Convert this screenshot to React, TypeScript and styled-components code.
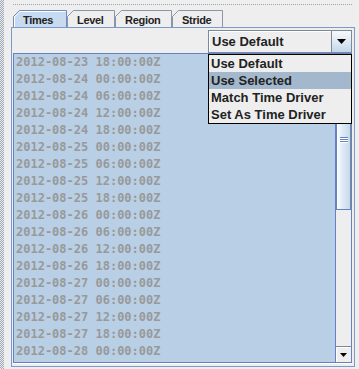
import styled, { createGlobalStyle } from "styled-components";

const UI = '"Liberation Sans", Arial, sans-serif';
const MONO = '"DejaVu Sans Mono", "Liberation Mono", monospace';

const GlobalStyle = createGlobalStyle`
  html, body {
    margin: 0;
    padding: 0;
    background: #eeeeee;
  }
  body {
    width: 359px;
    height: 369px;
    overflow: hidden;
  }
`;

const Frame = styled.div`
  display: flex;
  width: 359px;
  height: 369px;
  background: #eeeeee;
`;

const DotStrip = styled.div`
  flex: none;
  width: 4px;
  background-image: repeating-conic-gradient(#9ba7b6 0 25%, transparent 0 50%);
  background-size: 2px 2px;
`;

const Main = styled.div`
  flex: 1;
  display: flex;
  flex-direction: column;
`;

const TopDots = styled.div`
  flex: none;
  height: 1px;
  width: 340px;
  margin: 4px 0 0 9px;
  background-image: linear-gradient(to right, #9ba7b6 1px, transparent 1px);
  background-size: 2px 1px;
`;

const TabbedPane = styled.div`
  display: flex;
  flex-direction: column;
  width: 344px;
  height: 357px;
  margin: 5px 0 0 7px;
`;

const TabStrip = styled.div`
  display: flex;
  flex: none;
  height: 17px;
  padding-left: 2px;
`;

const TabBox = styled.div<{ $w: number }>`
  position: relative;
  width: ${(p) => p.$w}px;
  height: 17px;
  padding-left: 10px;
  box-sizing: border-box;
`;

const TabShape = styled.svg`
  position: absolute;
  left: 0;
  top: 0;
`;

const TabLabel = styled.span`
  position: relative;
  font-family: ${UI};
  font-weight: bold;
  font-size: 11px;
  letter-spacing: -0.3px;
  line-height: 17px;
  color: #222;
`;

const TabContent = styled.div`
  flex: 1;
  display: flex;
  flex-direction: column;
  border: 1px solid #7c99c9;
  padding: 2px 2px 3px 1px;
  min-height: 0;
`;

const ComboRow = styled.div`
  display: flex;
  justify-content: flex-end;
  flex: none;
`;

const Combo = styled.div`
  position: relative;
  display: flex;
  width: 144px;
  height: 23px;
  box-sizing: border-box;
  border: 1px solid #7a8a99;
`;

const ComboField = styled.div`
  flex: 1;
  padding-left: 3px;
  font-family: ${UI};
  font-weight: bold;
  font-size: 13px;
  line-height: 21px;
  color: #222;
  box-shadow: inset 1px 1px #ffffff;
`;

const ArrowButton = styled.div`
  display: flex;
  align-items: center;
  justify-content: center;
  width: 19px;
  border-left: 1px solid #7a8a99;
  background: linear-gradient(#f6f9fc, #dde8f3 55%, #c3d6ea);
`;

const Popup = styled.div`
  position: absolute;
  top: calc(100% + 2px);
  left: -1px;
  width: 144px;
  box-sizing: border-box;
  border: 1px solid #000000;
  background: #eeeeee;
  z-index: 3;
`;

const PopupItem = styled.div<{ $active?: boolean }>`
  height: 17px;
  padding-left: 2px;
  font-family: ${UI};
  font-weight: bold;
  font-size: 13px;
  line-height: 17px;
  color: #222;
  background: ${(p) => (p.$active ? "#a3b8cc" : "transparent")};
`;

const ScrollPane = styled.div`
  flex: 1;
  display: flex;
  min-height: 0;
  border: 1px solid #6382bf;
  box-shadow: 0 1px #ffffff;
`;

const List = styled.div`
  flex: 1;
  overflow: hidden;
  padding-left: 2px;
  background: #b8cfe5;
`;

const Row = styled.div`
  height: 17px;
  font-family: ${MONO};
  font-weight: bold;
  font-size: 12px;
  line-height: 17px;
  color: #999999;
  white-space: nowrap;
`;

const ScrollBar = styled.div`
  display: flex;
  flex-direction: column;
  width: 15px;
  border-left: 1px solid #6382bf;
  background: #eeeeee;
`;

const ScrollButton = styled.div`
  display: flex;
  align-items: center;
  justify-content: center;
  flex: none;
  height: 16px;
  box-sizing: border-box;
  border-top: 1px solid #7a8a99;
  background: #eeeeee;
  box-shadow: inset 1px 1px #ffffff;
`;

const Track = styled.div`
  flex: 1;
`;

const Thumb = styled.div`
  display: flex;
  align-items: center;
  justify-content: center;
  height: 140px;
  box-sizing: border-box;
  border: 1px solid #6382bf;
  border-right-color: #7a8a99;
  background: linear-gradient(to right, #ffffff, #e4edf6 35%, #c4d8ec);
`;

const Grip = styled.div`
  width: 8px;
  height: 6px;
  background: repeating-linear-gradient(#6382bf 0 1px, #ffffff 1px 2px);
`;

const Arrow = ({ w, h }: { w: number; h: number }) => (
  <svg width={w} height={h} viewBox={`0 0 ${w} ${h}`}>
    <polygon points={`0,0 ${w},0 ${w / 2},${h}`} fill="#000" />
  </svg>
);

const tabs = [
  { name: "Times", w: 54 },
  { name: "Level", w: 48 },
  { name: "Region", w: 57 },
  { name: "Stride", w: 51 },
];

const times = [
  "2012-08-23 18:00:00Z",
  "2012-08-24 00:00:00Z",
  "2012-08-24 06:00:00Z",
  "2012-08-24 12:00:00Z",
  "2012-08-24 18:00:00Z",
  "2012-08-25 00:00:00Z",
  "2012-08-25 06:00:00Z",
  "2012-08-25 12:00:00Z",
  "2012-08-25 18:00:00Z",
  "2012-08-26 00:00:00Z",
  "2012-08-26 06:00:00Z",
  "2012-08-26 12:00:00Z",
  "2012-08-26 18:00:00Z",
  "2012-08-27 00:00:00Z",
  "2012-08-27 06:00:00Z",
  "2012-08-27 12:00:00Z",
  "2012-08-27 18:00:00Z",
  "2012-08-28 00:00:00Z",
];

const options = ["Use Default", "Use Selected", "Match Time Driver", "Set As Time Driver"];

const Tab = ({ name, w, selected }: { name: string; w: number; selected?: boolean }) => (
  <TabBox $w={w}>
    <TabShape width={w} height={17}>
      <path
        d={`M0.5 17 V6.5 L6.5 0.5 H${w - 0.5} V17`}
        fill={selected ? "#c8daef" : "#eeeeee"}
        stroke={selected ? "#6f8cbd" : "#8a96a3"}
      />
      {selected && (
        <path d={`M1.5 17 V7 L7 1.5 H${w - 1.5}`} fill="none" stroke="#ffffff" />
      )}
    </TabShape>
    <TabLabel>{name}</TabLabel>
  </TabBox>
);

export default function App() {
  return (
    <Frame>
      <GlobalStyle />
      <DotStrip />
      <Main>
        <TopDots />
        <TabbedPane>
          <TabStrip>
            {tabs.map((t, i) => (
              <Tab key={t.name} name={t.name} w={t.w} selected={i === 0} />
            ))}
          </TabStrip>
          <TabContent>
            <ComboRow>
              <Combo>
                <ComboField>Use Default</ComboField>
                <ArrowButton>
                  <Arrow w={9} h={5} />
                </ArrowButton>
                <Popup>
                  {options.map((o) => (
                    <PopupItem key={o} $active={o === "Use Selected"}>
                      {o}
                    </PopupItem>
                  ))}
                </Popup>
              </Combo>
            </ComboRow>
            <ScrollPane>
              <List>
                {times.map((t) => (
                  <Row key={t}>{t}</Row>
                ))}
              </List>
              <ScrollBar>
                <ScrollButton />
                <Track>
                  <Thumb>
                    <Grip />
                  </Thumb>
                </Track>
                <ScrollButton>
                  <Arrow w={7} h={4} />
                </ScrollButton>
              </ScrollBar>
            </ScrollPane>
          </TabContent>
        </TabbedPane>
      </Main>
    </Frame>
  );
}
